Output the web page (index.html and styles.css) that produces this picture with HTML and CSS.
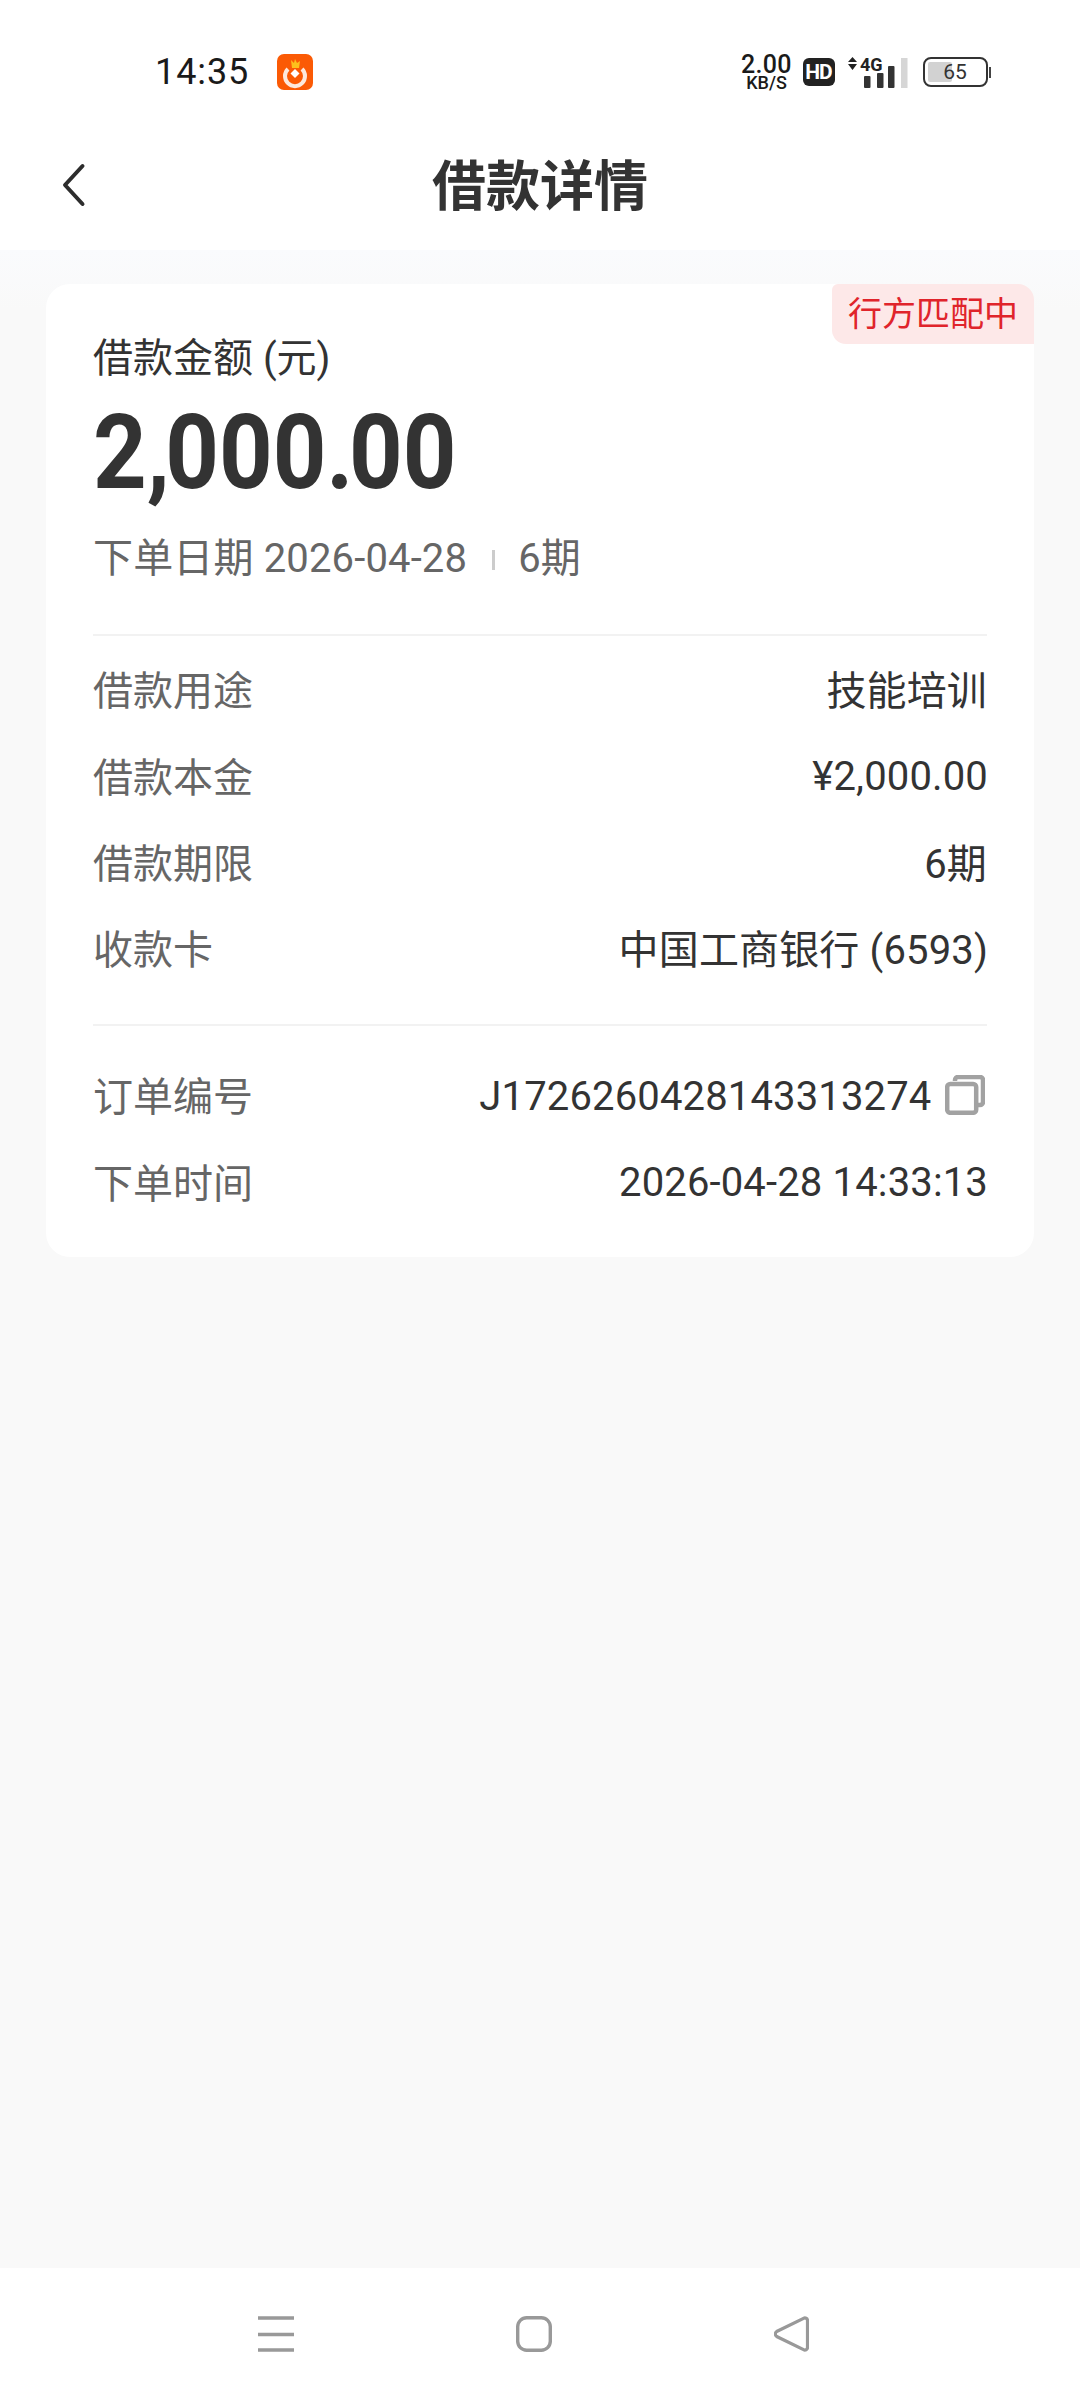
FILE: index.html
```html
<!DOCTYPE html>
<html lang="zh-CN">
<head>
<meta charset="utf-8">
<title>借款详情</title>
<link rel="stylesheet" href="styles.css">
</head>
<body>
<div class="screen">
  <header class="top">
    <div class="status">
      <div class="status-left">
        <span class="time">14:35</span>
        <svg class="app-icon" viewBox="0 0 36 36">
          <rect width="36" height="36" rx="7" fill="#fb5a05"/>
          <path d="M14 6l3 3 1-4 2 4 3-2-1 7h-7z" fill="#fdc01c"/>
          <path d="M11 15a10 10 0 1 0 14 0" fill="none" stroke="#fde9dc" stroke-width="4"/>
          <path d="M18 15l4.500 4.500-4.500 4.500-4.500-4.500z" fill="#fff"/>
        </svg>
      </div>
      <div class="status-right">
        <div class="speed"><span class="speed-num">2.00</span><span class="speed-unit">KB/S</span></div>
        <span class="hd">HD</span>
        <svg class="signal" viewBox="0 0 62 33">
          <path d="M1 6l4.500-5 4.500 5zM1 8h9l-4.500 6z" fill="#222"/>
          <text x="13" y="14.500" class="net">4G</text>
          <rect x="17" y="20" width="6.500" height="12" rx="1" fill="#333"/>
          <rect x="30" y="17" width="6.500" height="15" rx="1" fill="#333"/>
          <rect x="41" y="10" width="6.500" height="22" rx="1" fill="#333"/>
          <rect x="54" y="2" width="6.500" height="30" fill="#d6d6d6"/>
        </svg>
        <div class="battery">
          <div class="battery-body"><span class="battery-fill"></span><span class="battery-num">65</span></div>
          <span class="battery-cap"></span>
        </div>
      </div>
    </div>
    <nav class="nav">
      <svg class="back" viewBox="0 0 26 44"><path d="M22.500 3L5 22l17.500 19" fill="none" stroke="#2d2d2d" stroke-width="4" stroke-linecap="round" stroke-linejoin="round"/></svg>
      <h1 class="title">借款详情</h1>
    </nav>
  </header>

  <main class="content">
    <section class="card">
      <span class="tag">行方匹配中</span>
      <div class="summary">
        <div class="amount-label">借款金额 (元)</div>
        <div class="amount">2<span class="punct">,</span>000<span class="punct">.</span>00</div>
        <div class="meta"><span>下单日期 2026-04-28</span><i class="meta-sep"></i><span>6期</span></div>
      </div>
      <div class="group group-first">
        <div class="row"><span class="key">借款用途</span><span class="val">技能培训</span></div>
        <div class="row"><span class="key">借款本金</span><span class="val val-latin">¥2,000.00</span></div>
        <div class="row"><span class="key">借款期限</span><span class="val">6期</span></div>
        <div class="row"><span class="key">收款卡</span><span class="val val-end">中国工商银行 (6593)</span></div>
      </div>
      <div class="group group-second">
        <div class="row"><span class="key">订单编号</span><span class="val val-copy"><span class="val-num">J1726260428143313274</span><svg class="copy" viewBox="0 0 40 40"><path d="M10 6V5a3 3 0 0 1 3-3h22a3 3 0 0 1 3 3v22a3 3 0 0 1-3 3h-3" fill="none" stroke="#a2a2a2" stroke-width="4.500"/><rect x="2.200" y="9" width="29" height="28.800" rx="3" fill="#fff" stroke="#a2a2a2" stroke-width="4.500"/></svg></span></div>
        <div class="row"><span class="key">下单时间</span><span class="val val-latin">2026-04-28 14:33:13</span></div>
      </div>
    </section>
  </main>

  <footer class="softkeys">
    <svg class="key-menu" viewBox="0 0 36 36"><path d="M0 2h36M0 18.500h36M0 34h36" stroke="#999" stroke-width="3.400"/></svg>
    <svg class="key-home" viewBox="0 0 36 36"><rect x="1.700" y="1.700" width="32.600" height="32.600" rx="9" fill="none" stroke="#999" stroke-width="3.400"/></svg>
    <svg class="key-back" viewBox="0 0 35 36"><path d="M29.500 2.500a2.500 2.500 0 0 1 4 2v27a2.500 2.500 0 0 1-4 2L2.700 20.500a3 3 0 0 1 0-5z" fill="none" stroke="#999" stroke-width="3.200"/></svg>
  </footer>
</div>
</body>
</html>
```

FILE: styles.css
```css
* { box-sizing: border-box; margin: 0; padding: 0; }
html, body { width: 1080px; height: 2400px; overflow: hidden; }
body { font-family: Roboto, "Noto Sans CJK SC", sans-serif; color: #333; background: #fff; }
.screen { width: 1080px; height: 2400px; display: flex; flex-direction: column; }

.top { height: 250px; background: #fff; flex: none; }
.status { height: 130px; padding: 45px 89px 0 155px; display: flex; align-items: flex-start; justify-content: space-between; }
.status-left { display: flex; align-items: center; height: 54px; gap: 28px; }
.time { font-size: 36px; color: #1a1a1a; letter-spacing: .9px; line-height: 54px; }
.app-icon { width: 36px; height: 36px; display: block; }
.status-right { display: flex; align-items: center; height: 54px; }
.speed { display: flex; flex-direction: column; align-items: center; width: 50px; margin-right: 11px; color: #1a1a1a; font-weight: 500; }
.speed-num { font-size: 25px; line-height: 21px; letter-spacing: .3px; }
.speed-unit { font-size: 18px; line-height: 15px; }
.hd { width: 32px; height: 28px; background: #222; color: #fff; border-radius: 6px; font-size: 21px; font-weight: 700; line-height: 28px; text-align: center; margin-right: 12px; letter-spacing: -1px; }
.signal { width: 62px; height: 33px; display: block; margin-right: 14px; overflow: visible; }
.net { font: 700 18px Roboto, sans-serif; fill: #222; }
.battery { display: flex; align-items: center; gap: 1px; }
.battery-body { position: relative; width: 65px; height: 30px; border: 2.500px solid #333; border-radius: 8px; overflow: hidden; display: flex; align-items: center; justify-content: center; }
.battery-fill { position: absolute; left: 3px; top: 3px; bottom: 3px; width: 24px; background: #d2d2d2; border-radius: 2px; }
.battery-num { position: relative; font-size: 21px; line-height: 24px; color: #333; }
.battery-cap { width: 2.500px; height: 11px; background: #444; }

.nav { height: 120px; display: flex; align-items: center; justify-content: center; position: relative; padding-bottom: 4px; }
.back { position: absolute; left: 60px; top: 33px; width: 26px; height: 44px; }
.title { font-size: 54px; line-height: 80px; font-weight: 700; color: #333; }

.content { flex: 1; background: linear-gradient(#fafbfd 0, #f9f9f9 60px); padding: 34px 46px 0; }
.card { position: relative; background: #fff; border-radius: 24px; height: 973px; padding: 45px 47px 0 47px; }
.tag { position: absolute; right: 0; top: 0; width: 202px; height: 60px; background: #fde8e8; color: #e0242b; font-size: 34px; line-height: 60px; text-align: center; border-radius: 6px 16px 0 14px; }

.summary { height: 305px; }
.amount-label { font-size: 40px; line-height: 60px; color: #333; }
.amount { font-size: 104px; line-height: 118px; font-weight: 700; color: #333; margin-top: 5px; white-space: nowrap; transform: scaleX(.9); transform-origin: left center; }
.punct { letter-spacing: -5px; }
.meta { font-size: 40px; line-height: 60px; color: #666; display: flex; align-items: center; margin-top: 17px; letter-spacing: .15px; }
.meta-sep { width: 3px; height: 20px; background: #ccc; margin: 2px 23px 0 25px; }

.group { border-top: 2px solid #f2f2f2; }
.group-first { height: 390px; padding-top: 9px; }
.group-second { padding-top: 25px; }
.row { height: 86.400px; display: flex; align-items: center; justify-content: space-between; font-size: 40px; }
.key { color: #666; }
.val { color: #333; letter-spacing: .15px; }
.val-latin { padding-top: 4px; margin-right: -1px; }
.val-end { margin-right: -1px; }
.val-num { padding-top: 4px; }
.val-copy { display: flex; align-items: center; gap: 13.500px; }
.copy { width: 40px; height: 40px; display: block; margin: 2px 2px 0 0; }

.softkeys { height: 132px; background: #fff; flex: none; display: flex; padding: 48px 0 0 258px; align-items: flex-start; }
.key-menu { width: 36px; height: 36px; display: block; }
.key-home { width: 36px; height: 36px; display: block; margin-left: 222px; }
.key-back { width: 35px; height: 36px; display: block; margin-left: 222px; }
```
